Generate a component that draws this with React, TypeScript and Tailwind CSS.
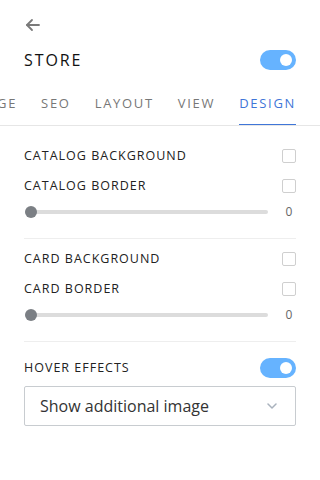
import { useState } from 'react';

function Toggle({ on }: { on: boolean }) {
    return (
        <div className={on ? 'w-[36px] h-[20px] rounded-full bg-[#66b3ff] flex items-center justify-end px-[4px]' : 'w-[36px] h-[20px] rounded-full bg-[#ccc] flex items-center px-[4px]'}>
            <div className="w-[12px] h-[12px] rounded-full bg-white" />
        </div>
    );
}

function Checkbox() {
    return <div className="w-[14px] h-[14px] border border-[#cfcfcf] rounded-[2px] bg-white" />;
}

function Row({ label, children }: { label: string; children: React.ReactNode }) {
    return (
        <div className="flex items-center justify-between h-[30px]">
            <span className="text-[12.5px] font-medium tracking-[0.08em] text-[#222]">{label}</span>
            {children}
        </div>
    );
}

function Slider({ value }: { value: number }) {
    return (
        <div className="flex items-center h-[22px]">
            <div className="relative flex-1 mr-[16px] h-[4px] rounded-full bg-[#dcdcdc] ml-[1px]">
                <div className="absolute left-[0px] top-[-4px] w-[12px] h-[12px] rounded-full bg-[#7b7f84]" />
            </div>
            <span className="text-[12px] text-[#666] w-[10px] text-center mr-[2px]">{value}</span>
        </div>
    );
}

export default function App() {
    const [tab] = useState('DESIGN');
    const tabs = ['PAGE', 'SEO', 'LAYOUT', 'VIEW', 'DESIGN'];

    return (
        <div className="w-[320px] h-[480px] bg-white overflow-hidden" style={{ fontFamily: '"Open Sans", "Liberation Sans", sans-serif' }}>
            <div className="pl-[24px] pr-[24px] pt-[16px]">
                <svg width="18" height="18" viewBox="0 0 18 18" fill="none" stroke="#7a7a7a" strokeWidth="1.8" strokeLinecap="round" strokeLinejoin="round">
                    <path d="M15 9H3" />
                    <path d="M8 4L3 9l5 5" />
                </svg>
                <div className="flex items-center justify-between mt-[14px]">
                    <span className="text-[16px] font-medium tracking-[0.12em] text-[#111]">STORE</span>
                    <Toggle on />
                </div>
            </div>

            {/* tabs, scrolled to the right end */}
            <div className="mt-[18px] border-b border-[#e6e6e6]">
                <div className="w-[296px] overflow-hidden flex justify-end gap-[24px]">
                    {tabs.map(t => (
                        <div key={t} className={t === tab ? 'shrink-0 pb-[10px] border-b-2 border-[#3f76d8] mb-[-1px]' : 'shrink-0 pb-[10px]'}>
                            <span className={t === tab ? 'text-[13px] font-medium tracking-[0.13em] text-[#3f76d8]' : 'text-[13px] font-medium tracking-[0.13em] text-[#777]'}>{t}</span>
                        </div>
                    ))}
                </div>
            </div>

            <div className="px-[24px] pt-[15px]">
                <Row label="CATALOG BACKGROUND"><Checkbox /></Row>
                <Row label="CATALOG BORDER"><Checkbox /></Row>
                <Slider value={0} />
                <div className="h-px bg-[#eee] mt-[15px] mb-[5px]" />

                <Row label="CARD BACKGROUND"><Checkbox /></Row>
                <Row label="CARD BORDER"><Checkbox /></Row>
                <Slider value={0} />
                <div className="h-px bg-[#eee] mt-[15px] mb-[11px]" />

                <Row label="HOVER EFFECTS"><Toggle on /></Row>
                <div className="mt-[3px] h-[40px] border border-[#c8ccd0] rounded-[2px] flex items-center justify-between pl-[15px] pr-[18px]">
                    <span className="text-[16px] text-[#333]">Show additional image</span>
                    <svg width="10" height="6" viewBox="0 0 10 6" fill="none" stroke="#a9b2bd" strokeWidth="1.5" strokeLinecap="round" strokeLinejoin="round">
                        <path d="M1 1l4 4 4-4" />
                    </svg>
                </div>
            </div>
        </div>
    );
}
